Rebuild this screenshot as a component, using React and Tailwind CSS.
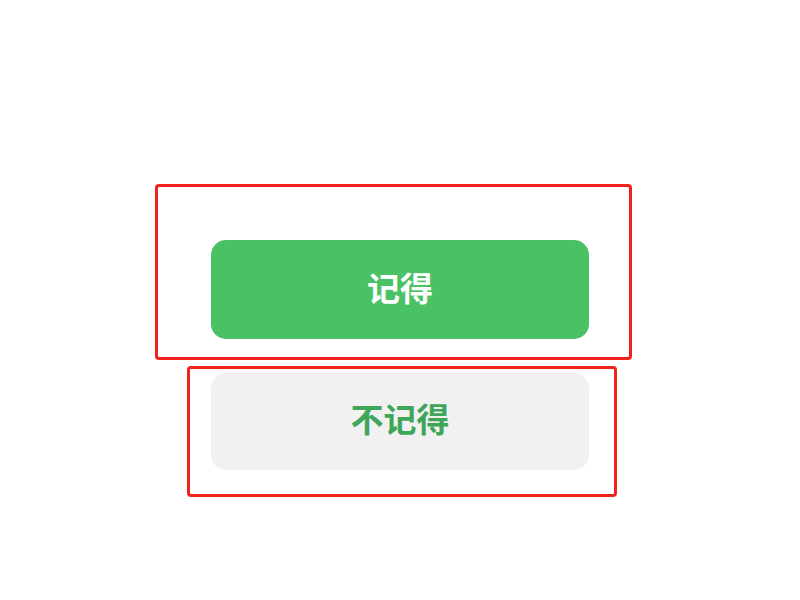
import React from 'react';

export default function App() {
  return (
    <div
      className="h-[600px] w-[800px] bg-white pt-[184px]"
      style={{ fontFamily: '"Noto Sans CJK SC", "Noto Sans", sans-serif' }}
    >
      {/* Remember */}
      <div className="ml-[155px] h-[176px] w-[477px] rounded-[4px] border-[3px] border-[#f2211b] pl-[53px] pt-[53px]">
        <button className="flex h-[99px] w-[378px] items-center justify-center rounded-[15px] bg-[#4bc165] pb-[3px] text-[33px] font-semibold text-white">
          记得
        </button>
      </div>

      {/* Don't remember */}
      <div className="ml-[187px] mt-[6px] h-[131px] w-[430px] rounded-[4px] border-[3px] border-[#f2211b] pl-[21px] pt-[4px]">
        <button className="flex h-[97px] w-[378px] items-center justify-center rounded-[15px] bg-[#f1f1f1] pb-[5px] text-[33px] font-semibold text-[#3ea659]">
          不记得
        </button>
      </div>
    </div>
  );
}
